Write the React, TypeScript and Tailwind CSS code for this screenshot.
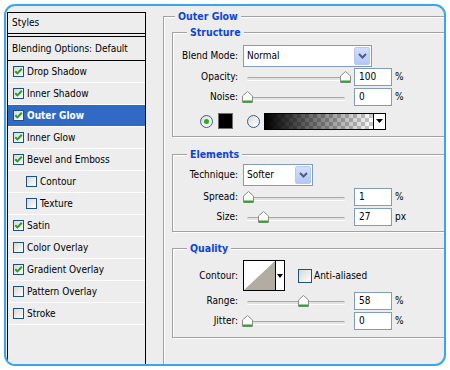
import React from "react";

type Item = { label: string; checked: boolean; indent?: boolean; selected?: boolean };

const items: Item[] = [
  { label: "Drop Shadow", checked: true },
  { label: "Inner Shadow", checked: true },
  { label: "Outer Glow", checked: true, selected: true },
  { label: "Inner Glow", checked: true },
  { label: "Bevel and Emboss", checked: true },
  { label: "Contour", checked: false, indent: true },
  { label: "Texture", checked: false, indent: true },
  { label: "Satin", checked: true },
  { label: "Color Overlay", checked: false },
  { label: "Gradient Overlay", checked: true },
  { label: "Pattern Overlay", checked: false },
  { label: "Stroke", checked: false },
];

function CheckMark() {
  return (
    <svg width="9" height="9" viewBox="0 0 9 9">
      <path d="M1.3 4.2 L3.4 6.4 L7.8 1.8" stroke="#1fa31f" strokeWidth="2" fill="none" />
    </svg>
  );
}

function Box({ checked, big }: { checked: boolean; big?: boolean }) {
  return (
    <span
      className={
        (big ? "w-[14px] h-[14px] " : "w-[11px] h-[11px] ") +
        "shrink-0 flex items-center justify-center border border-[#1c5180] bg-gradient-to-br from-[#d8d8d2] to-white"
      }
    >
      {checked ? <CheckMark /> : null}
    </span>
  );
}

function Radio({ checked }: { checked?: boolean }) {
  return (
    <span className="w-[13px] h-[13px] shrink-0 rounded-full border border-[#3b5e85] bg-gradient-to-br from-[#dcdcd7] to-white flex items-center justify-center">
      {checked ? <span className="w-[5px] h-[5px] rounded-full bg-[#2aa82a]" /> : null}
    </span>
  );
}

function Thumb() {
  return (
    <svg width="11" height="12" viewBox="0 0 11 12">
      <path d="M5.5 0.5 L10.5 5 L10.5 11.5 L0.5 11.5 L0.5 5 Z" fill="#fbfbf8" stroke="#8c8c8c" />
      <rect x="1" y="9.5" width="9" height="2" fill="#2da62d" />
    </svg>
  );
}

function Slider({ pos }: { pos: number }) {
  return (
    <div className="relative ml-[5px] w-[111px] h-[20px] shrink-0">
      <div className="absolute left-[4px] top-[10px] w-[98px] h-[3px] rounded-full border-t border-[#a8a8a8] bg-[#e2e2e2] shadow-[0_1px_0_#fff]" />
      <div className="absolute top-[4px]" style={{ left: 4 + pos - 5 }}>
        <Thumb />
      </div>
    </div>
  );
}

function NumInput({ value }: { value: string }) {
  return (
    <div className="w-[38px] h-[18px] shrink-0 border border-[#7f9db9] bg-white flex items-center pl-[4px]">{value}</div>
  );
}

function Chevron() {
  return (
    <svg width="9" height="6" viewBox="0 0 9 6">
      <path d="M1 1 L4.5 4.5 L8 1" stroke="#4a5f88" strokeWidth="2" fill="none" />
    </svg>
  );
}

function Select({ value, w }: { value: string; w: string }) {
  return (
    <div className={w + " h-[22px] ml-[5px] shrink-0 border border-[#7f9db9] bg-white flex items-center justify-between pl-[3px] pr-[1px]"}>
      <span>{value}</span>
      <span className="w-[16px] h-[18px] rounded-[2px] border border-[#b7c9f2] bg-gradient-to-b from-[#d2defc] to-[#b4c7f5] flex items-center justify-center">
        <Chevron />
      </span>
    </div>
  );
}

function Label({ children }: { children: React.ReactNode }) {
  return <span className="w-[65px] shrink-0 text-right">{children}</span>;
}

function SliderRow({ label, pos, value, unit, extra }: { label: string; pos: number; value: string; unit: string; extra?: string }) {
  return (
    <div className={"flex items-center h-[20px] " + (extra ?? "")}>
      <Label>{label}</Label>
      <Slider pos={pos} />
      <NumInput value={value} />
      <span className="ml-[3px]">{unit}</span>
    </div>
  );
}

function Group({ title, className, children, legendLeft }: { title: string; className: string; children?: React.ReactNode; legendLeft: string }) {
  return (
    <div className={"relative border border-[#a2a2a2] shadow-[inset_1px_1px_0_#fff,1px_1px_0_#fff] " + className}>
      <span className={"absolute -top-[7px] px-[3px] bg-[#ededed] font-bold text-[10.5px] text-[#0d46d2] leading-[13px] " + legendLeft}>{title}</span>
      {children}
    </div>
  );
}

function GradientSwatch() {
  return (
    <div className="ml-[4px] w-[122px] h-[17px] shrink-0 border border-black flex">
      <svg width="108" height="15" viewBox="0 0 108 15" className="block">
        <defs>
          <pattern id="chk" width="8" height="8" patternUnits="userSpaceOnUse">
            <rect width="8" height="8" fill="#ffffff" />
            <rect width="4" height="4" fill="#c9c9c9" />
            <rect x="4" y="4" width="4" height="4" fill="#c9c9c9" />
          </pattern>
          <linearGradient id="g" x1="0" x2="1" y1="0" y2="0">
            <stop offset="0" stopColor="#000" stopOpacity="1" />
            <stop offset="1" stopColor="#000" stopOpacity="0" />
          </linearGradient>
        </defs>
        <rect width="108" height="15" fill="url(#chk)" />
        <rect width="108" height="15" fill="url(#g)" />
      </svg>
      <div className="flex-1 border-l border-black bg-white flex items-center justify-center">
        <svg width="7" height="4" viewBox="0 0 7 4">
          <path d="M0 0 L7 0 L3.5 4 Z" fill="#000" />
        </svg>
      </div>
    </div>
  );
}

function ContourBox() {
  return (
    <div className="ml-[5px] w-[42px] h-[31px] shrink-0 border border-black bg-white flex">
      <svg width="31" height="29" viewBox="0 0 31 29" className="block">
        <rect width="31" height="29" fill="#fff" />
        <path d="M0 29 L31 0 L31 29 Z" fill="#b1ada2" />
      </svg>
      <div className="flex-1 border-l border-black bg-white flex items-center justify-center">
        <svg width="6" height="4" viewBox="0 0 6 4">
          <path d="M0 0 L6 0 L3 4 Z" fill="#000" />
        </svg>
      </div>
    </div>
  );
}

export default function App() {
  return (
    <div className="w-[450px] h-[370px] bg-white p-[4px] font-['DejaVu_Sans_Condensed','Liberation_Sans',sans-serif] text-[10px] text-black leading-none">
      <div className="w-[442px] h-[362px] border-2 border-[#38a6ee] rounded-[11px] bg-[#ededed] overflow-hidden flex items-start">
        {/* Left styles list */}
        <div className="ml-[1px] mt-[6px] w-[139px] h-[400px] shrink-0 border border-black bg-[#ededed]">
          <div className="h-[21px] flex items-center pl-[4px] border-b border-black">Styles</div>
          <div className="h-[2px]" />
          <div className="h-[25px] flex items-center pl-[4px] border-y border-black">Blending Options: Default</div>
          {items.map((it) => (
            <div
              key={it.label}
              className={
                "h-[22px] flex items-center border-b border-white gap-[3px] " +
                (it.indent ? "pl-[18px] " : "pl-[5px] ") +
                (it.selected ? "bg-[#316ac5] text-white font-bold" : "")
              }
            >
              <Box checked={it.checked} />
              <span>{it.label}</span>
            </div>
          ))}
        </div>

        {/* Right settings */}
        <Group title="Outer Glow" legendLeft="left-[11px]" className="ml-[17px] mt-[10px] w-[320px] h-[400px] shrink-0">
          <div className="ml-[8px] mt-[15px] w-[300px]">
            <Group title="Structure" legendLeft="left-[14px]" className="w-[300px] pt-[12px] pb-[6px]">
              <div className="flex items-center h-[21px]">
                <Label>Blend Mode:</Label>
                <Select value="Normal" w="w-[129px]" />
              </div>
              <SliderRow label="Opacity:" pos={98} value="100" unit="%" extra="mt-[1px]" />
              <SliderRow label="Noise:" pos={0} value="0" unit="%" />
              <div className="flex items-center h-[18px] mt-[5px] ml-[27px]">
                <Radio checked />
                <div className="ml-[5px] w-[15px] h-[16px] shrink-0 bg-black border border-[#6e6e6e]" />
                <span className="ml-[14px]">
                  <Radio />
                </span>
                <GradientSwatch />
              </div>
            </Group>

            <Group title="Elements" legendLeft="left-[14px]" className="w-[300px] mt-[17px] pt-[9px] pb-[4px]">
              <div className="flex items-center h-[22px]">
                <Label>Technique:</Label>
                <Select value="Softer" w="w-[70px]" />
              </div>
              <SliderRow label="Spread:" pos={1} value="1" unit="%" extra="mt-[1px]" />
              <SliderRow label="Size:" pos={16} value="27" unit="px" />
            </Group>

            <Group title="Quality" legendLeft="left-[14px]" className="w-[300px] mt-[16px] pt-[11px] pb-[6px]">
              <div className="flex items-center h-[31px]">
                <Label>Contour:</Label>
                <ContourBox />
                <span className="ml-[13px]">
                  <Box checked={false} big />
                </span>
                <span className="ml-[2px]">Anti-aliased</span>
              </div>
              <SliderRow label="Range:" pos={56} value="58" unit="%" />
              <SliderRow label="Jitter:" pos={0} value="0" unit="%" />
            </Group>
          </div>
        </Group>
      </div>
    </div>
  );
}
